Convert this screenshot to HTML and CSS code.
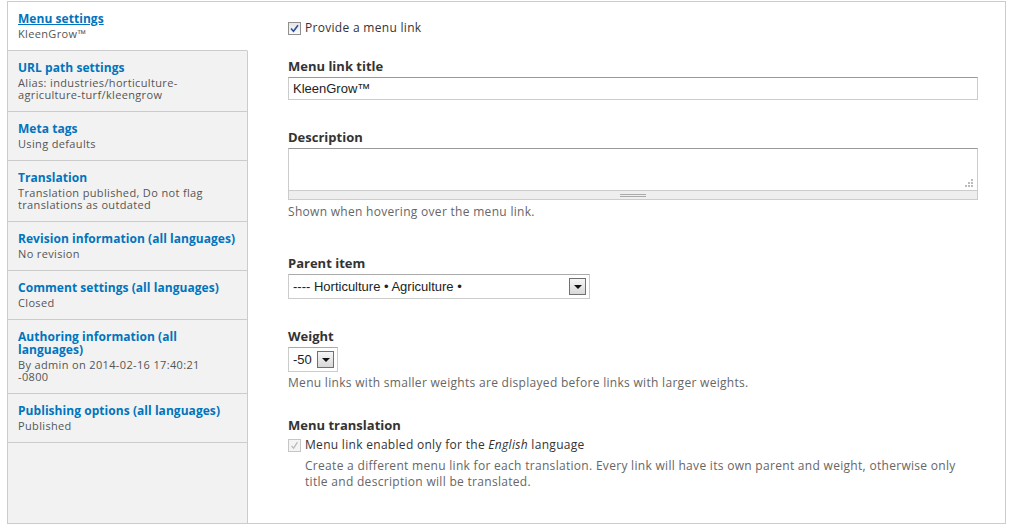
FILE: index.html
```html
<!DOCTYPE html>
<html>
<head>
<meta charset="utf-8">
<link rel="stylesheet" href="styles.css">
</head>
<body>
<div class="panel">
  <div class="tabs">
    <div class="tab active"><a class="tab-title">Menu settings</a><div class="tab-desc">KleenGrow™</div></div>
    <div class="tab"><a class="tab-title">URL path settings</a><div class="tab-desc">Alias: industries/horticulture-<br>agriculture-turf/kleengrow</div></div>
    <div class="tab"><a class="tab-title">Meta tags</a><div class="tab-desc">Using defaults</div></div>
    <div class="tab"><a class="tab-title">Translation</a><div class="tab-desc">Translation published, Do not flag<br>translations as outdated</div></div>
    <div class="tab"><a class="tab-title">Revision information (all languages)</a><div class="tab-desc">No revision</div></div>
    <div class="tab"><a class="tab-title">Comment settings (all languages)</a><div class="tab-desc">Closed</div></div>
    <div class="tab"><a class="tab-title">Authoring information (all<br>languages)</a><div class="tab-desc">By admin on 2014-02-16 17:40:21<br>-0800</div></div>
    <div class="tab"><a class="tab-title">Publishing options (all languages)</a><div class="tab-desc">Published</div></div>
    <div class="tab-fill"></div>
  </div>
  <div class="content">
    <div class="check-row first">
      <span class="cbox"><svg width="9" height="9" viewBox="0 0 9 9"><path d="M1 4.5 L3.5 7.2 L8 1.2" fill="none" stroke="#2d4e9c" stroke-width="1.6"/></svg></span>
      <span>Provide a menu link</span>
    </div>

    <div class="label l-title">Menu link title</div>
    <div class="text-input">KleenGrow™</div>

    <div class="label l-desc">Description</div>
    <div class="textarea">
      <svg class="resize" width="9" height="9" viewBox="0 0 9 9"><g fill="#bbb"><rect x="6" y="0" width="2" height="2"/><rect x="3" y="3" width="2" height="2"/><rect x="6" y="3" width="2" height="2"/><rect x="0" y="6" width="2" height="2"/><rect x="3" y="6" width="2" height="2"/><rect x="6" y="6" width="2" height="2"/></g></svg>
    </div>
    <div class="grip"><span class="grip-lines"></span></div>
    <div class="help h-desc">Shown when hovering over the menu link.</div>

    <div class="label l-parent">Parent item</div>
    <div class="select s-parent"><span class="sel-text">---- Horticulture • Agriculture •</span><span class="sel-btn"><span class="tri"></span></span></div>

    <div class="label l-weight">Weight</div>
    <div class="select s-weight"><span class="sel-text">-50</span><span class="sel-btn"><span class="tri"></span></span></div>
    <div class="help h-weight">Menu links with smaller weights are displayed before links with larger weights.</div>

    <div class="label l-trans">Menu translation</div>
    <div class="check-row second">
      <span class="cbox disabled"><svg width="9" height="9" viewBox="0 0 9 9"><path d="M1.5 4.8 L3.6 7.2 L7.5 1.2" fill="none" stroke="#b8b8b8" stroke-width="1.2"/></svg></span>
      <span>Menu link enabled only for the <em>English</em> language</span>
    </div>
    <div class="help h-trans">Create a different menu link for each translation. Every link will have its own parent and weight, otherwise only<br>title and description will be translated.</div>
  </div>
</div>
</body>
</html>
```

FILE: styles.css
```css
* { box-sizing: border-box; }
html, body { margin: 0; padding: 0; background: #fff; }
body {
  font-family: "Open Sans", "DejaVu Sans", sans-serif;
  font-size: 12px;
  color: #333;
}
.panel {
  display: flex;
  margin: 1px 0 0 7px;
  width: 999px;
  height: 523px;
  border: 1px solid #ccc;
}
.tabs {
  width: 240px;
  flex: none;
  display: flex;
  flex-direction: column;
  background: #f2f2f2;
}
.tab {
  padding: 10px 10px 10px 10px;
  border-bottom: 1px solid #ccc;
  border-right: 1px solid #ccc;
}
.tab.active {
  background: #fff;
  border-right-color: #fff;
}
.tab-title {
  display: block;
  color: #0074bd;
  font-weight: bold;
  font-size: 12px;
  line-height: 13px;
  margin-bottom: 3px;
  letter-spacing: 0.05px;
}
.tab.active .tab-title { text-decoration: underline; }
.tab-desc {
  color: #555;
  font-size: 11px;
  line-height: 12px;
  letter-spacing: 0.35px;
}
.tab-fill {
  flex: 1;
  border-right: 1px solid #ccc;
}
.content {
  flex: 1;
  padding: 18px 27px 0 40px;
}
.check-row {
  display: flex;
  align-items: center;
  gap: 4px;
  height: 16px;
  line-height: 16px;
  letter-spacing: 0.3px;
}
.check-row em { font-style: italic; }
.cbox {
  width: 13px;
  height: 13px;
  border: 1px solid #8f8f8f;
  background: linear-gradient(#e6e6e6, #fafafa);
  display: flex;
  align-items: center;
  justify-content: center;
  flex: none;
}
.cbox.disabled {
  border-color: #c6c6c6;
  background: #f4f4f4;
}
.label {
  font-weight: bold;
  font-size: 13px;
  line-height: 16px;
  color: #333;
  margin-bottom: 3px;
}
.l-title { margin-top: 22px; }
.l-desc { margin-top: 29px; }
.l-parent { margin-top: 35px; }
.l-weight { margin-top: 29px; }
.l-trans { margin-top: 26px; }
.text-input {
  height: 23px;
  border: 1px solid #ccc;
  border-top-color: #999;
  font-family: "Liberation Sans", Arial, sans-serif;
  font-size: 13px;
  line-height: 21px;
  padding-left: 4px;
  color: #222;
}
.textarea {
  position: relative;
  height: 43px;
  border: 1px solid #ccc;
  border-top-color: #999;
}
.resize {
  position: absolute;
  right: 3px;
  bottom: 2px;
}
.grip {
  height: 9px;
  background: #eee;
  border: 1px solid #ccc;
  border-top: none;
  display: flex;
  justify-content: center;
  align-items: center;
}
.grip-lines {
  width: 26px;
  height: 3px;
  border-top: 1px solid #aaa;
  border-bottom: 1px solid #aaa;
}
.help {
  color: #666;
  line-height: 16px;
  margin-top: 4px;
  letter-spacing: 0.3px;
}
.h-weight { margin-top: 3px; }
.h-trans { margin-top: 5px; padding-left: 17px; }
.check-row.second { margin-top: 4px; }
.select {
  height: 25px;
  border: 1px solid #ccc;
  border-top-color: #aaa;
  display: flex;
  align-items: center;
  justify-content: space-between;
  padding: 0 3px 0 4px;
  font-family: "Liberation Sans", Arial, sans-serif;
  font-size: 13px;
  color: #222;
}
.s-parent { width: 302px; }
.s-weight { width: 50px; }
.sel-btn {
  width: 17px;
  height: 17px;
  border: 1px solid #707070;
  background: linear-gradient(#f6f6f6, #d8d8d8);
  display: flex;
  align-items: center;
  justify-content: center;
}
.tri {
  width: 0;
  height: 0;
  border-left: 4px solid transparent;
  border-right: 4px solid transparent;
  border-top: 4px solid #111;
  margin-top: 1px;
}
```
